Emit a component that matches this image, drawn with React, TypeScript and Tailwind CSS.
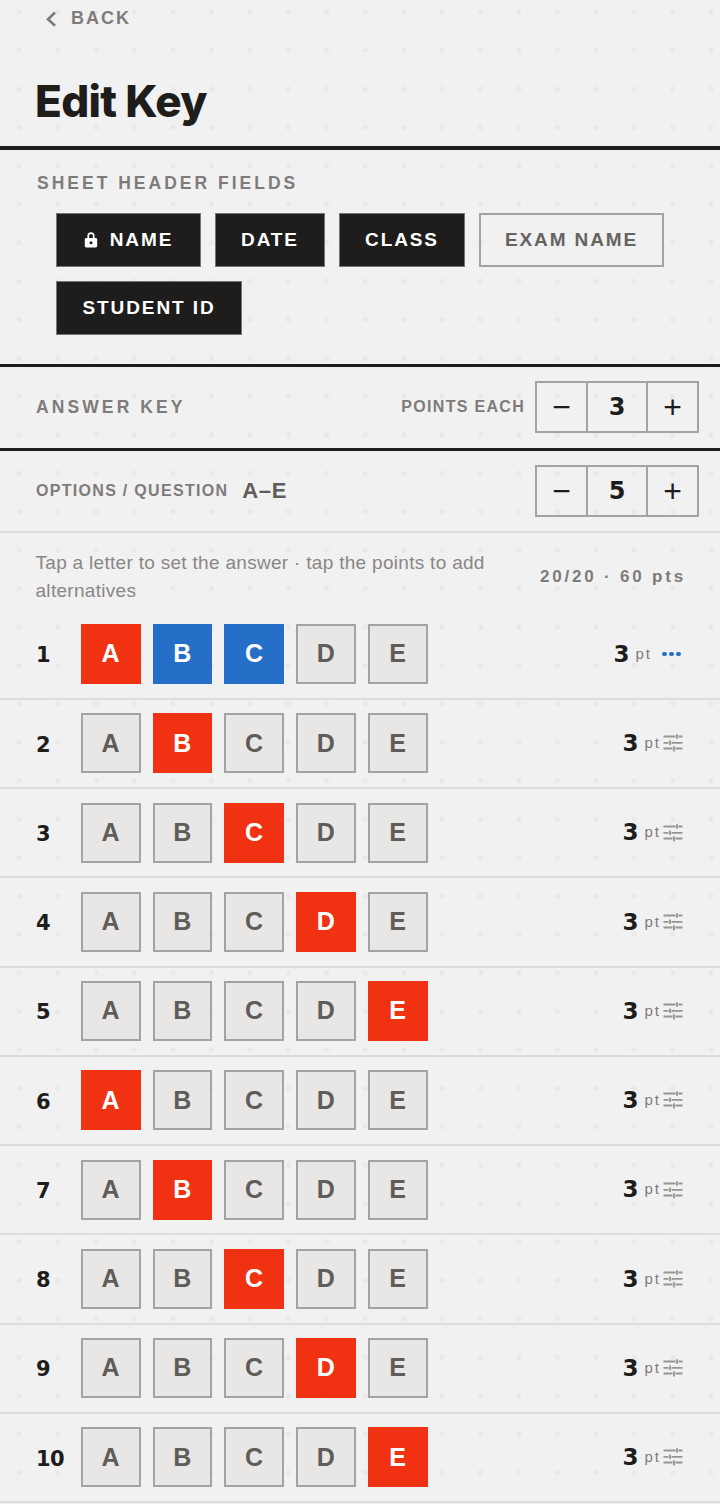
import React from "react";

const sans = "font-['Liberation_Sans',Arial,sans-serif]";
const wide = "font-['DejaVu_Sans',sans-serif]";

function Sliders() {
  return (
    <svg width="20" height="20" viewBox="0 0 20 20" fill="none" stroke="#979593" strokeWidth="1.8" className="block">
      <path d="M0.5 3.5h12M15.5 3.5h4M14 1.2v4.6" />
      <path d="M0.5 9.8h5M8.5 9.8h11M7 7.6v4.4" />
      <path d="M0.5 15.5h9M12.5 15.5h7M11 13.2v5.4" />
    </svg>
  );
}

function Stepper({ value }: { value: number }) {
  return (
    <div className="flex h-[52px] w-[164px] border-2 border-[#a3a3a3] text-[#1e1d1b]">
      <div className={`flex w-[49px] items-center justify-center text-[32px] leading-none ${sans}`}>−</div>
      <div className={`flex w-[62px] items-center justify-center border-x-2 border-[#a3a3a3] text-[24px] font-bold ${wide}`}>{value}</div>
      <div className={`flex flex-1 items-center justify-center text-[32px] leading-none ${sans}`}>+</div>
    </div>
  );
}

function Chip({ label, active, lock, cls }: { label: string; active?: boolean; lock?: boolean; cls: string }) {
  return (
    <div className={`flex h-[54px] items-center justify-center gap-[12px] text-[19px] font-bold tracking-[1.9px] ${sans} ${cls} ${active ? "bg-[#1e1d1b] text-white border border-[#77756f]" : "border-2 border-[#a3a3a3] text-[#66635f]"}`}>
      {lock && (
        <svg width="14" height="18" viewBox="0 0 14 18" fill="#ffffff">
          <path d="M3.4 7V4.8a3.6 3.6 0 0 1 7.2 0V7h-1.7V4.8a1.9 1.9 0 0 0-3.8 0V7z" />
          <rect x="0.8" y="7" width="12.4" height="9.5" rx="1.4" />
          <circle cx="7" cy="11.7" r="1.5" fill="#1e1d1b" />
        </svg>
      )}
      {label}
    </div>
  );
}

function Letter({ l, state }: { l: string; state: "on" | "alt" | "off" }) {
  const c =
    state === "on"
      ? "bg-[#f03212] text-white"
      : state === "alt"
        ? "bg-[#266fc9] text-white"
        : "bg-[#e8e7e5] border-2 border-[#a3a3a3] text-[#5f5c59]";
  return <div className={`flex h-[60px] w-[59.75px] items-center justify-center text-[25px] font-bold ${sans} ${c}`}>{l}</div>;
}

function Row({ n }: { n: number }) {
  const first = n === 1;
  const correct = (n - 1) % 5;
  return (
    <div className="flex h-[89.25px] items-center border-b-2 border-[#dddbdb] pl-9 pr-[38px]">
      <div className={`mt-[4px] w-[44.75px] text-[21px] font-bold tracking-[-0.5px] text-[#1e1d1b] ${wide}`}>{n}</div>
      <div className="flex gap-[12px]">
        {["A", "B", "C", "D", "E"].map((l, i) => (
          <Letter key={l} l={l} state={i === correct ? "on" : first && i < 3 ? "alt" : "off"} />
        ))}
      </div>
      <div className="ml-auto flex items-center">
        <span className={`text-[23px] font-bold text-[#1e1d1b] ${wide}`}>3</span>
        <span className={`ml-[6px] text-[15px] tracking-[2px] text-[#7f7b7a] ${sans}`}>pt</span>
        {first ? (
          <span className="ml-[10px] mr-px flex w-[19px] justify-center gap-[2.5px]">
            <i className="h-[4.5px] w-[4.5px] rounded-full bg-[#266fc9]" />
            <i className="h-[4.5px] w-[4.5px] rounded-full bg-[#266fc9]" />
            <i className="h-[4.5px] w-[4.5px] rounded-full bg-[#266fc9]" />
          </span>
        ) : (
          <span className="-mr-px ml-[2px]">
            <Sliders />
          </span>
        )}
      </div>
    </div>
  );
}

export default function App() {
  return (
    <div className="h-[1504px] w-[720px] overflow-hidden bg-[#f1f1f1] bg-[radial-gradient(circle,#e8e8e8_2.2px,transparent_2.8px)] bg-[size:38.45px_38.45px] bg-[position:0px_-7.2px]">
      <div className="flex h-[37px] items-center pl-[44px]">
        <svg width="14" height="18" viewBox="0 0 14 18" fill="none" stroke="#7f7b7a" strokeWidth="2.6" className="mt-px">
          <path d="M11 2.5 4 9.3l7 6.5" />
        </svg>
        <span className={`ml-[13px] text-[18px] font-bold tracking-[2px] text-[#7f7b7a] ${sans}`}>BACK</span>
      </div>
      <div className="flex h-[113px] items-center border-b-[4px] border-[#1e1d1b] pl-[35px]">
        <h1 className="mt-[19px] font-['Inter',sans-serif] text-[44px] font-extrabold tracking-[-0.7px] text-[#1e1d1b]">Edit Key</h1>
      </div>
      <div className="h-[216.5px] border-b-[3.5px] border-[#1e1d1b]">
        <div className={`pl-[37px] pt-[23px] text-[17.5px] font-bold leading-[20px] tracking-[3px] text-[#7f7b7a] ${sans}`}>SHEET HEADER FIELDS</div>
        <div className="mt-[20px] flex flex-wrap gap-x-[14px] gap-y-[14px] pl-[56px]">
          <Chip label="NAME" active lock cls="w-[145px]" />
          <Chip label="DATE" active cls="w-[110px]" />
          <Chip label="CLASS" active cls="w-[126px]" />
          <Chip label="EXAM NAME" cls="w-[185px]" />
          <Chip label="STUDENT ID" active cls="w-[186px]" />
        </div>
      </div>
      <div className="flex h-[84px] items-center border-b-[3.5px] border-[#1e1d1b] pl-[36px] pr-[21px]">
        <span className={`text-[17.5px] font-bold tracking-[3.1px] text-[#7f7b7a] ${sans}`}>ANSWER KEY</span>
        <span className={`ml-auto mr-[10px] text-[16px] font-bold tracking-[1.3px] text-[#7f7b7a] ${sans}`}>POINTS EACH</span>
        <Stepper value={3} />
      </div>
      <div className="flex h-[82px] items-center border-b-2 border-[#dddbdb] pl-[36px] pr-[21px]">
        <span className={`text-[16px] font-bold tracking-[1.3px] text-[#7f7b7a] ${sans}`}>OPTIONS / QUESTION</span>
        <span className={`ml-[14px] text-[22px] font-bold tracking-[0.6px] text-[#5f5c59] ${sans}`}>A–E</span>
        <div className="ml-auto">
          <Stepper value={5} />
        </div>
      </div>
      <div className="flex h-[78px] items-center pl-[35.5px] pr-[34px] pt-[10px]">
        <p className={`w-[480px] text-[19px] leading-[28px] tracking-[0.3px] text-[#8a8685] ${sans}`}>Tap a letter to set the answer · tap the points to add alternatives</p>
        <span className={`ml-auto text-[17px] font-bold tracking-[2.8px] text-[#7f7b7a] ${sans}`}>20/20 · 60 pts</span>
      </div>
      {Array.from({ length: 10 }, (_, i) => (
        <Row key={i} n={i + 1} />
      ))}
    </div>
  );
}
